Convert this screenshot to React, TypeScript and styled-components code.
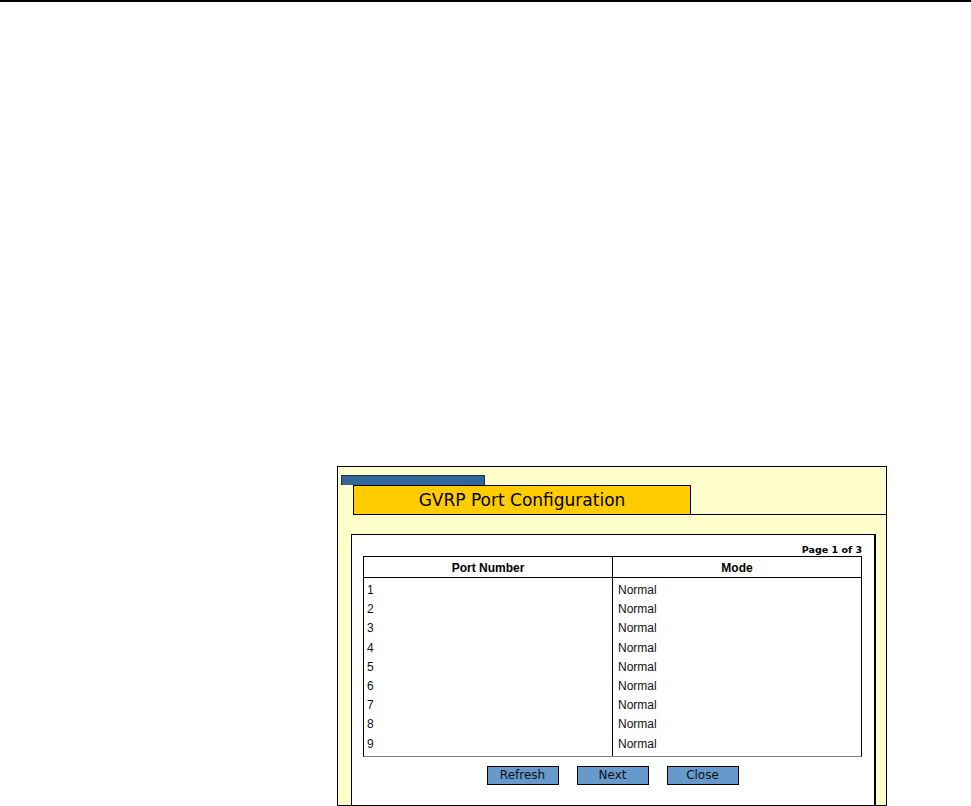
import React from 'react'
import styled, { createGlobalStyle } from 'styled-components'

const GlobalStyle = createGlobalStyle`
  html, body {
    margin: 0;
    padding: 0;
    background: #ffffff;
  }
  body {
    font-family: "Liberation Sans", Arial, sans-serif;
  }
`

const Page = styled.div`
  width: 971px;
  height: 806px;
  overflow: hidden;
`

const TopRule = styled.div`
  height: 2px;
  background: #000;
`

const Panel = styled.div`
  box-sizing: border-box;
  margin: 464px 0 0 337px;
  width: 550px;
  height: 340px;
  background: #ffffcc;
  border: 1px solid #000;
  display: flex;
  flex-direction: column;
`

const Tab = styled.div`
  box-sizing: border-box;
  margin: 8px 0 0 3px;
  width: 144px;
  height: 10px;
  background: #336699;
  border: 1px solid #1b3550;
  border-bottom: none;
`

const HeaderRow = styled.div`
  display: flex;
  align-items: flex-end;
  padding-left: 15px;
`

const TitleBox = styled.div`
  box-sizing: border-box;
  width: 338px;
  height: 30px;
  background: #ffcc00;
  border: 1px solid #000;
  display: flex;
  align-items: center;
  justify-content: center;
  font-family: "DejaVu Sans", Verdana, sans-serif;
  font-size: 17px;
  color: #000;
`

const HeaderLine = styled.div`
  flex: 1;
  border-bottom: 1px solid #000;
`

const Sheet = styled.div`
  flex: 1;
  margin: 19px 10px 0 13px;
  background: #fff;
  border: 1px solid #000;
  border-right-width: 2px;
  border-bottom: none;
  padding: 9px 12px 0 11px;
`

const PageInfo = styled.div`
  width: 499px;
  text-align: right;
  font-family: "DejaVu Sans", Verdana, sans-serif;
  font-weight: bold;
  font-size: 9.5px;
  line-height: 12px;
  color: #000;
`

const Table = styled.div`
  box-sizing: border-box;
  width: 499px;
  border: 1px solid #000;
  border-bottom-color: #808080;
`

const HeadRow = styled.div`
  display: flex;
  height: 21px;
  box-sizing: border-box;
  border-bottom: 1px solid #000;
`

const HeadCell = styled.div<{ $divider?: boolean }>`
  box-sizing: border-box;
  width: ${(p) => (p.$divider ? '249px' : 'auto')};
  flex: ${(p) => (p.$divider ? 'none' : '1')};
  border-right: ${(p) => (p.$divider ? '1px solid #000' : 'none')};
  display: flex;
  align-items: center;
  justify-content: center;
  padding-top: 1px;
  font-weight: bold;
  font-size: 12px;
  color: #000;
`

const Body = styled.div`
  display: flex;
`

const Column = styled.div<{ $divider?: boolean; $indent: number }>`
  box-sizing: border-box;
  width: ${(p) => (p.$divider ? '249px' : 'auto')};
  flex: ${(p) => (p.$divider ? 'none' : '1')};
  border-right: ${(p) => (p.$divider ? '1px solid #000' : 'none')};
  padding: 3px 0 2px ${(p) => p.$indent}px;
`

const Cell = styled.div`
  height: 19.2px;
  line-height: 19.2px;
  font-size: 12px;
  color: #111;
`

const ButtonBar = styled.div`
  width: 499px;
  display: flex;
  justify-content: center;
  gap: 18px;
  margin-top: 9px;
`

const Button = styled.button`
  box-sizing: border-box;
  width: 72px;
  height: 19px;
  padding: 0;
  background: #6699cc;
  border: 1px solid #000;
  border-radius: 0;
  font-family: "DejaVu Sans", Verdana, sans-serif;
  font-size: 12px;
  line-height: 17px;
  color: #111;
`

const ports = [1, 2, 3, 4, 5, 6, 7, 8, 9]

export default function App() {
  return (
    <>
      <GlobalStyle />
      <Page>
        <TopRule />
        <Panel>
          <Tab />
          <HeaderRow>
            <TitleBox>GVRP Port Configuration</TitleBox>
            <HeaderLine />
          </HeaderRow>
          <Sheet>
            <PageInfo>Page 1 of 3</PageInfo>
            <Table>
              <HeadRow>
                <HeadCell $divider>Port Number</HeadCell>
                <HeadCell>Mode</HeadCell>
              </HeadRow>
              <Body>
                <Column $divider $indent={3}>
                  {ports.map((p) => (
                    <Cell key={p}>{p}</Cell>
                  ))}
                </Column>
                <Column $indent={5}>
                  {ports.map((p) => (
                    <Cell key={p}>Normal</Cell>
                  ))}
                </Column>
              </Body>
            </Table>
            <ButtonBar>
              <Button>Refresh</Button>
              <Button>Next</Button>
              <Button>Close</Button>
            </ButtonBar>
          </Sheet>
        </Panel>
      </Page>
    </>
  )
}
